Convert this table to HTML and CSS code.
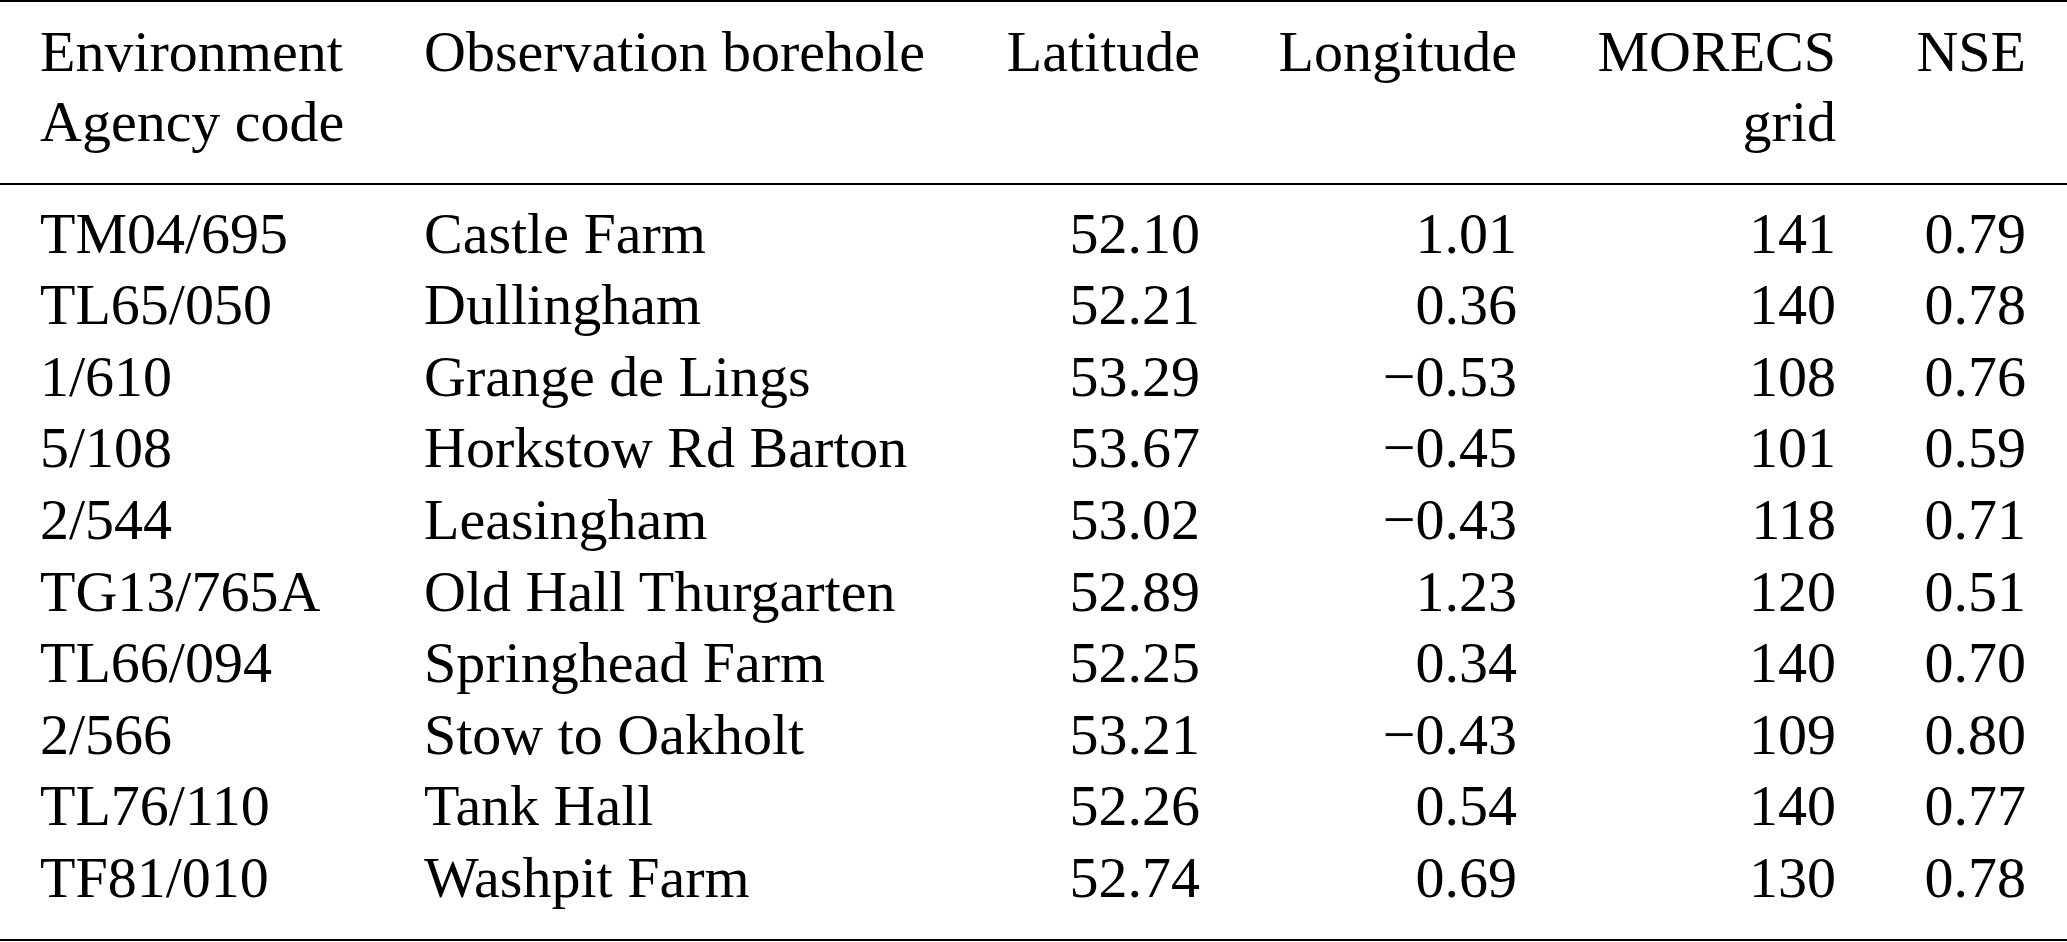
FILE: index.html
```html
<!DOCTYPE html>
<html lang="en">
<head>
<meta charset="utf-8">
<title>Observation boreholes</title>
<link rel="stylesheet" href="styles.css">
</head>
<body>
<table class="data-table">
  <colgroup>
    <col class="c-code">
    <col class="c-name">
    <col class="c-lat">
    <col class="c-lon">
    <col class="c-grid">
    <col class="c-nse">
  </colgroup>
  <thead>
    <tr>
      <th class="left first">Environment<br>Agency code</th>
      <th class="left">Observation borehole</th>
      <th class="num">Latitude</th>
      <th class="num">Longitude</th>
      <th class="num">MORECS<br>grid</th>
      <th class="num last">NSE</th>
    </tr>
  </thead>
  <tbody>
    <tr><td class="first">TM04/695</td><td>Castle Farm</td><td class="num">52.10</td><td class="num">1.01</td><td class="num">141</td><td class="num last">0.79</td></tr>
    <tr><td class="first">TL65/050</td><td>Dullingham</td><td class="num">52.21</td><td class="num">0.36</td><td class="num">140</td><td class="num last">0.78</td></tr>
    <tr><td class="first">1/610</td><td>Grange de Lings</td><td class="num">53.29</td><td class="num">−0.53</td><td class="num">108</td><td class="num last">0.76</td></tr>
    <tr><td class="first">5/108</td><td>Horkstow Rd Barton</td><td class="num">53.67</td><td class="num">−0.45</td><td class="num">101</td><td class="num last">0.59</td></tr>
    <tr><td class="first">2/544</td><td>Leasingham</td><td class="num">53.02</td><td class="num">−0.43</td><td class="num">118</td><td class="num last">0.71</td></tr>
    <tr><td class="first">TG13/765A</td><td>Old Hall Thurgarten</td><td class="num">52.89</td><td class="num">1.23</td><td class="num">120</td><td class="num last">0.51</td></tr>
    <tr><td class="first">TL66/094</td><td>Springhead Farm</td><td class="num">52.25</td><td class="num">0.34</td><td class="num">140</td><td class="num last">0.70</td></tr>
    <tr><td class="first">2/566</td><td>Stow to Oakholt</td><td class="num">53.21</td><td class="num">−0.43</td><td class="num">109</td><td class="num last">0.80</td></tr>
    <tr><td class="first">TL76/110</td><td>Tank Hall</td><td class="num">52.26</td><td class="num">0.54</td><td class="num">140</td><td class="num last">0.77</td></tr>
    <tr><td class="first">TF81/010</td><td>Washpit Farm</td><td class="num">52.74</td><td class="num">0.69</td><td class="num">130</td><td class="num last">0.78</td></tr>
  </tbody>
</table>
</body>
</html>
```
FILE: styles.css
```css
html, body {
  margin: 0;
  padding: 0;
  background: #ffffff;
}

body {
  font-family: "Liberation Serif", "Times New Roman", serif;
  font-size: 58px;
  color: #000000;
}

.data-table {
  width: 2067px;
  table-layout: fixed;
  border-collapse: separate;
  border-spacing: 0;
}

.c-code { width: 424px; }
.c-name { width: 536px; }
.c-lat  { width: 240px; }
.c-lon  { width: 317px; }
.c-grid { width: 319px; }
.c-nse  { width: 231px; }

.data-table th,
.data-table td {
  padding: 0;
  white-space: nowrap;
  vertical-align: top;
  font-weight: normal;
}

.data-table th {
  line-height: 70px;
  padding-top: 15px;
  padding-bottom: 26px;
  border-top: 2px solid #000;
  border-bottom: 2px solid #000;
}

.data-table td {
  line-height: 71.6px;
}

.data-table tbody tr:first-child td {
  padding-top: 12.6px;
}

.data-table tbody tr:last-child td {
  padding-bottom: 25.4px;
  border-bottom: 2px solid #000;
}

.left { text-align: left; }
.num { text-align: right; }
.first { padding-left: 40px !important; }
.last { padding-right: 41px !important; }
```
